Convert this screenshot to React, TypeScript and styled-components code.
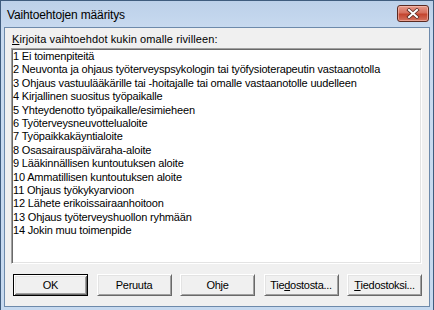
import React from "react";
import styled, { createGlobalStyle } from "styled-components";

const Global = createGlobalStyle`
  html, body { margin: 0; padding: 0; background: #ffffff; }
  body { font-family: "Liberation Sans", Arial, sans-serif; }
  * { box-sizing: border-box; }
`;

const Window = styled.div`
  width: 434px;
  height: 310px;
  display: flex;
  flex-direction: column;
  border: 1px solid #3f5c7e;
  border-bottom: none;
  background: linear-gradient(#bcd0e9 0px, #c9dbf0 30px, #c6d9ef 100%);
  padding: 0 3px 3px 3px;
  overflow: hidden;
`;

const TitleBar = styled.div`
  height: 26px;
  display: flex;
  align-items: flex-start;
  justify-content: space-between;
  padding: 0 1px 0 3px;
`;

const Title = styled.span`
  font-family: "Liberation Sans", Arial, sans-serif;
  font-size: 12px;
  line-height: 14px;
  letter-spacing: -0.15px;
  color: #000;
  padding-top: 7px;
`;

const CloseButton = styled.div`
  margin-top: 4px;
  width: 32px;
  height: 17px;
  border: 1px solid #5b2a22;
  border-radius: 3px;
  background: linear-gradient(#e69a8b 0%, #d6705e 45%, #c4452f 55%, #d4735f 100%);
  box-shadow: inset 0 0 0 1px rgba(255, 210, 200, 0.5);
  display: flex;
  align-items: center;
  justify-content: center;
`;

const Client = styled.div`
  flex: 1;
  display: flex;
  flex-direction: column;
  background: #f0f0f0;
  border: 1px solid #6d8aab;
  padding: 0 7px 9px 6px;
`;

const Label = styled.div`
  font-size: 11px;
  line-height: 13px;
  letter-spacing: 0.1px;
  color: #000;
  padding: 5px 0 0 1px;
  margin-bottom: 2px;
`;

const ListBox = styled.textarea`
  height: 216px;
  width: 100%;
  resize: none;
  overflow: hidden;
  margin: 0;
  background: #fff;
  color: #000;
  font-family: "Liberation Sans", Arial, sans-serif;
  font-size: 11px;
  line-height: 13.4px;
  letter-spacing: -0.17px;
  border: 1px solid;
  border-color: #a0a0a0 #ffffff #ffffff #a0a0a0;
  box-shadow: inset 1px 1px 0 #696969, inset -1px -1px 0 #e3e3e3;
  padding: 1px 0 0 1px;
  outline: none;
`;

const ButtonRow = styled.div`
  display: flex;
  justify-content: space-between;
  margin-top: 10px;
  padding-left: 2px;
`;

const Button = styled.button<{ $default?: boolean }>`
  width: 75px;
  height: 22px;
  margin: 0;
  padding: 0;
  background: #f0f0f0;
  color: #000;
  font-family: "Liberation Sans", Arial, sans-serif;
  font-size: 11px;
  letter-spacing: -0.3px;
  border: 1px solid;
  border-color: ${(p) => (p.$default ? "#000 #000 #000 #000" : "#ffffff #696969 #696969 #ffffff")};
  box-shadow: ${(p) =>
    p.$default
      ? "inset 1px 1px 0 #ffffff, inset -1px -1px 0 #696969, inset 2px 2px 0 #e3e3e3, inset -2px -2px 0 #a0a0a0"
      : "inset 1px 1px 0 #e3e3e3, inset -1px -1px 0 #a0a0a0"};
  display: flex;
  align-items: center;
  justify-content: center;
  cursor: default;
  outline: none;
`;

const items = [
  "1 Ei toimenpiteitä",
  "2 Neuvonta ja ohjaus työterveyspsykologin tai työfysioterapeutin vastaanotolla",
  "3 Ohjaus vastuulääkärille tai -hoitajalle tai omalle vastaanotolle uudelleen",
  "4 Kirjallinen suositus työpaikalle",
  "5 Yhteydenotto työpaikalle/esimieheen",
  "6 Työterveysneuvottelualoite",
  "7 Työpaikkakäyntialoite",
  "8 Osasairauspäiväraha-aloite",
  "9 Lääkinnällisen kuntoutuksen aloite",
  "10 Ammatillisen kuntoutuksen aloite",
  "11 Ohjaus työkykyarvioon",
  "12 Lähete erikoissairaanhoitoon",
  "13 Ohjaus työterveyshuollon ryhmään",
  "14 Jokin muu toimenpide",
];

export default function App() {
  return (
    <>
      <Global />
      <Window>
        <TitleBar>
          <Title>Vaihtoehtojen määritys</Title>
          <CloseButton>
            <svg width="14" height="11" viewBox="0 0 14 11">
              <path d="M3 2 L11 9 M11 2 L3 9" stroke="#5a2a22" strokeWidth="3.6" strokeLinecap="square" />
              <path d="M3 2 L11 9 M11 2 L3 9" stroke="#ffffff" strokeWidth="2" strokeLinecap="square" />
            </svg>
          </CloseButton>
        </TitleBar>
        <Client>
          <Label>
            <u>K</u>irjoita vaihtoehdot kukin omalle rivilleen:
          </Label>
          <ListBox defaultValue={items.join("\n")} spellCheck={false} />
          <ButtonRow>
            <Button $default>OK</Button>
            <Button>Peruuta</Button>
            <Button>Ohje</Button>
            <Button>
              Tie<u>d</u>ostosta...
            </Button>
            <Button>
              <u>T</u>iedostoksi...
            </Button>
          </ButtonRow>
        </Client>
      </Window>
    </>
  );
}
